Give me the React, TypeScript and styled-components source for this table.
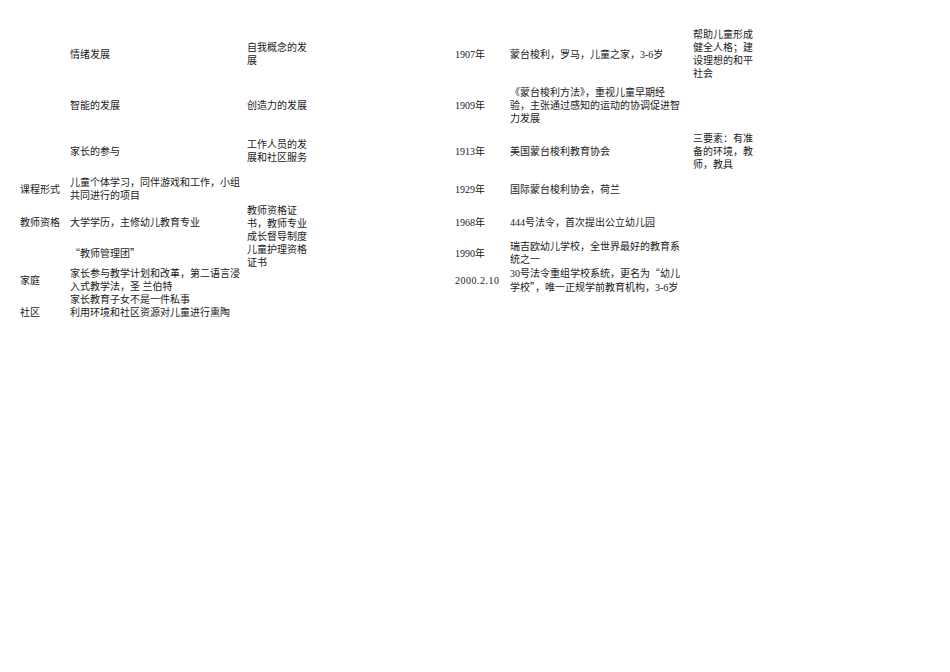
import React from "react";
import styled, { createGlobalStyle } from "styled-components";

const Global = createGlobalStyle`
  html, body { margin: 0; padding: 0; background: #fff; }
  body {
    font-family: "Liberation Serif", "Noto Sans CJK SC", serif;
    font-size: 10px;
    color: #1a1a1a;
  }
`;

const ROWS = "54px 48px 44px 32px 34px 28px 26px 13px 13px";

const Page = styled.div`
  width: 950px;
  height: 672px;
  box-sizing: border-box;
  padding: 27px 0 0 20px;
  display: flex;
  gap: 146px;
  align-items: flex-start;
`;

const Table = styled.div<{ $cols: string }>`
  display: grid;
  grid-template-columns: ${(p) => p.$cols};
  grid-template-rows: ${ROWS};
`;

const Cell = styled.div<{ $row: number; $col: number; $span?: number; $spaced?: boolean }>`
  grid-row: ${(p) => `${p.$row} / span ${p.$span ?? 1}`};
  grid-column: ${(p) => p.$col};
  align-self: center;
  line-height: 13px;
  white-space: nowrap;
  letter-spacing: ${(p) => (p.$spaced ? "0.5px" : "normal")};
`;

const Quote = styled.span`
  font-family: "Noto Sans CJK SC", sans-serif;
`;

type C = { r: number; c: number; span?: number; spaced?: boolean; lines: string[] };

const left: C[] = [
  { r: 1, c: 2, lines: ["情绪发展"] },
  { r: 1, c: 3, lines: ["自我概念的发", "展"] },
  { r: 2, c: 2, lines: ["智能的发展"] },
  { r: 2, c: 3, lines: ["创造力的发展"] },
  { r: 3, c: 2, lines: ["家长的参与"] },
  { r: 3, c: 3, lines: ["工作人员的发", "展和社区服务"] },
  { r: 4, c: 1, lines: ["课程形式"] },
  { r: 4, c: 2, lines: ["儿童个体学习，同伴游戏和工作，小组", "共同进行的项目"] },
  { r: 5, c: 1, lines: ["教师资格"] },
  { r: 5, c: 2, lines: ["大学学历，主修幼儿教育专业"] },
  { r: 5, c: 3, span: 2, lines: ["教师资格证", "书，教师专业", "成长督导制度", "儿童护理资格", "证书"] },
  { r: 6, c: 2, lines: ["“教师管理团”"] },
  { r: 7, c: 1, lines: ["家庭"] },
  { r: 7, c: 2, lines: ["家长参与教学计划和改革，第二语言浸", "入式教学法，圣 兰伯特"] },
  { r: 8, c: 2, lines: ["家长教育子女不是一件私事"] },
  { r: 9, c: 1, lines: ["社区"] },
  { r: 9, c: 2, lines: ["利用环境和社区资源对儿童进行熏陶"] },
];

const right: C[] = [
  { r: 1, c: 1, lines: ["1907年"] },
  { r: 1, c: 2, lines: ["蒙台梭利，罗马，儿童之家，3-6岁"] },
  { r: 1, c: 3, lines: ["帮助儿童形成", "健全人格；建", "设理想的和平", "社会"] },
  { r: 2, c: 1, lines: ["1909年"] },
  { r: 2, c: 2, lines: ["《蒙台梭利方法》，重视儿童早期经", "验，主张通过感知的运动的协调促进智", "力发展"] },
  { r: 3, c: 1, lines: ["1913年"] },
  { r: 3, c: 2, lines: ["美国蒙台梭利教育协会"] },
  { r: 3, c: 3, lines: ["三要素：有准", "备的环境，教", "师，教具"] },
  { r: 4, c: 1, lines: ["1929年"] },
  { r: 4, c: 2, lines: ["国际蒙台梭利协会，荷兰"] },
  { r: 5, c: 1, lines: ["1968年"] },
  { r: 5, c: 2, lines: ["444号法令，首次提出公立幼儿园"] },
  { r: 6, c: 1, lines: ["1990年"] },
  { r: 6, c: 2, lines: ["瑞吉欧幼儿学校，全世界最好的教育系", "统之一"] },
  { r: 7, c: 1, spaced: true, lines: ["2000.2.10"] },
  { r: 7, c: 2, lines: ["30号法令重组学校系统，更名为“幼儿", "学校”，唯一正规学前教育机构，3-6岁"] },
];

const renderLine = (line: string) =>
  line.split(/([“”])/).map((part, k) =>
    part === "“" || part === "”" ? <Quote key={k}>{part}</Quote> : <React.Fragment key={k}>{part}</React.Fragment>
  );

const renderCells = (cells: C[]) =>
  cells.map((cell, i) => (
    <Cell key={i} $row={cell.r} $col={cell.c} $span={cell.span} $spaced={cell.spaced}>
      {cell.lines.map((l, j) => (
        <React.Fragment key={j}>
          {j > 0 && <br />}
          {renderLine(l)}
        </React.Fragment>
      ))}
    </Cell>
  ));

export default function App() {
  return (
    <>
      <Global />
      <Page>
        <Table $cols="50px 177px 62px">{renderCells(left)}</Table>
        <Table $cols="55px 183px 70px">{renderCells(right)}</Table>
      </Page>
    </>
  );
}
